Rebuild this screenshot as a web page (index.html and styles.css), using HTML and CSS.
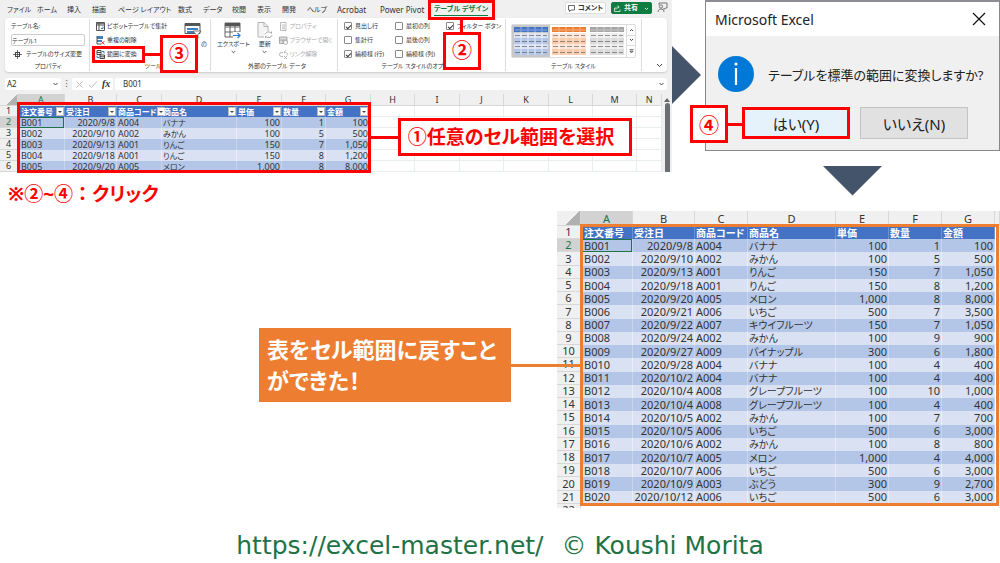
FILE: index.html
```html
<!DOCTYPE html>
<html lang="ja">
<head>
<meta charset="utf-8">
<meta name="viewport" content="width=device-width, initial-scale=1">
<title>テーブルをセル範囲に変換</title>
<link rel="stylesheet" href="styles.css">
</head>
<body>
<main class="slide">
<section class="steps">
  <div class="step-main">
    <div class="excel">
      <div class="tabbar">
        <nav class="tabs">
          <button class="tab">ファイル</button><button class="tab">ホーム</button><button class="tab">挿入</button><button class="tab">描画</button><button class="tab">ページ レイアウト</button><button class="tab">数式</button><button class="tab">データ</button><button class="tab">校閲</button><button class="tab">表示</button><button class="tab">開発</button><button class="tab">ヘルプ</button><button class="tab latin">Acrobat</button><button class="tab latin">Power Pivot</button><button class="tab active">テーブル デザイン</button>
        </nav>
        <div class="actions">
          <button class="action"><svg width="7" height="7" viewBox="0 0 7 7"><path d="M.5 .5h6v4.500h-3.500l-1.500 1.500v-1.500h-1z" fill="none" stroke="#444" stroke-width=".8"/></svg>コメント</button>
          <button class="action share"><svg width="7" height="7" viewBox="0 0 7 7"><path d="M2 3H.5v3.500h5.500V4.500M2 4.500C2 3 3 2 4.500 2M3.500 .5L5.200 2 3.500 3.500" fill="none" stroke="#fff" stroke-width=".7"/></svg>共有<svg class="share-caret" width="5" height="5" viewBox="0 0 5 5"><path d="M1 2l1.500 1.500L4 2" fill="none" stroke="#fff" stroke-width=".8"/></svg></button>
          <button class="person" aria-label="フィードバック"><svg width="11" height="11" viewBox="0 0 11 11"><g fill="none" stroke="#555" stroke-width=".8"><path d="M2 3V1h8v5H8.500L7 7.500V6"/><circle cx="4" cy="4.500" r="1.600"/><path d="M1 10c0-4 6-4 6 0"/></g></svg></button>
        </div>
      </div>
      <div class="ribbon">
        <div class="group g-prop">
          <div class="rows">
            <label for="tname">テーブル名:</label>
            <input id="tname" value="テーブル1">
            <button class="cmd resize"><svg width="9" height="9" viewBox="0 0 9 9"><g fill="none" stroke="#444"><rect x="2.500" y="2.500" width="4" height="4"/><path d="M4.500 0v9M0 4.500h9" stroke-width=".8"/></g></svg>テーブルのサイズ変更</button>
          </div>
          <div class="gname">プロパティ</div>
        </div>
        <div class="group g-tool">
          <div class="cols">
            <div class="rows">
              <button class="cmd"><svg width="9" height="9" viewBox="0 0 9 9"><path d="M.5 .5h8v8h-8zM.5 3h8M3 .5v8M1 1.700h7" fill="none" stroke="#555"/><path d="M5 6.500h2V4.500" fill="none" stroke="#2b7cd3"/></svg>ピボットテーブルで集計</button>
              <button class="cmd"><svg width="9" height="9" viewBox="0 0 9 9"><path d="M1 0h6v3H1zM1 4h5v2H1z" fill="#3f7fc1"/><path d="M1 8V0M1 8h4" stroke="#555" fill="none"/><path d="M5 5l3.500 3.500M8.500 5L5 8.500" stroke="#d33"/></svg>重複の削除</button>
              <button class="cmd"><svg width="9" height="9" viewBox="0 0 9 9"><path d="M1 .5h4v4H1zM1 2.500h4M4 5h4.500v3.500H4zM4 6.800h4.500" fill="none" stroke="#444"/><path d="M1 5.500v2h2M6 1.500h2v2" fill="none" stroke="#2b7cd3"/></svg>範囲に変換</button>
            </div>
            <button class="big slicer"><svg width="18" height="17" viewBox="0 0 18 17"><path d="M1 1.500h15v10H1z" fill="#fff" stroke="#555"/><path d="M1 1h15v3H1z" fill="#555"/><path d="M3 6h11v2H3zM3 9h7v2H3z" fill="#3f7fc1"/><path d="M9 9h8l-3 3.500V16l-2-1v-2.500z" fill="#fff" stroke="#555" stroke-width=".8"/></svg><span>の</span></button>
          </div>
          <div class="gname">ツール</div>
        </div>
        <div class="group g-ext">
          <div class="cols">
            <button class="big"><svg width="18" height="17" viewBox="0 0 18 17"><path d="M1 1h15v14H1zM1 5h15M1 10h15M6 1v14M11 1v14" fill="#fff" stroke="#555" stroke-width=".9"/><path d="M1 1h15v3H1z" fill="#555"/><path d="M9 10h9v7H9z" fill="#fff"/><path d="M9 13.500h7M13.500 11l2.500 2.500-2.500 2.500" fill="none" stroke="#2b7cd3" stroke-width="1.200"/></svg><span>エクスポート</span><svg width="5" height="4" viewBox="0 0 5 4"><path d="M.7 1l1.800 1.800L4.300 1" fill="none" stroke="#444" stroke-width=".9"/></svg></button>
            <button class="big renew"><svg width="16" height="17" viewBox="0 0 16 17"><path d="M1 .5h6l4 4V15H1zM7 .5v4h4" fill="#f4f4f4" stroke="#aaa" stroke-width=".9"/><path d="M7 9h9v8H7z" fill="#fff"/><path d="M8 12.500c.5-3 5-3.500 6.500-1V9.500M15 13c-.5 3-5 3.500-6.500 1v2" fill="none" stroke="#aaa"/></svg><span>更新</span><svg width="5" height="4" viewBox="0 0 5 4"><path d="M.7 1l1.800 1.800L4.300 1" fill="none" stroke="#444" stroke-width=".9"/></svg></button>
            <div class="rows">
              <button class="cmd" disabled><svg width="9" height="9" viewBox="0 0 9 9"><path d="M1.500 .5h5.500v8h-5.500zM3 3h3M3 5h3M3 6.700h3" fill="none" stroke="#aaa" stroke-width=".8"/></svg>プロパティ</button>
              <button class="cmd" disabled><svg width="9" height="9" viewBox="0 0 9 9"><path d="M.5 1h7.500v6.500h-7.500zM.5 4h7.500M4 4v4" fill="#ddd" stroke="#999" stroke-width=".8"/><circle cx="6.500" cy="6.500" r="2" fill="#fff" stroke="#999" stroke-width=".7"/></svg>ブラウザーで開く</button>
              <button class="cmd" disabled><svg width="9" height="9" viewBox="0 0 9 9"><path d="M4 2.500H2.500a2 2 0 0 0 0 4H4M5 2.500h1.500a2 2 0 0 1 1.500 3M6.500 .5L5.500 2M5 6l3 3M8 6L5 9" fill="none" stroke="#aaa" stroke-width=".9"/></svg>リンク解除</button>
            </div>
          </div>
          <div class="gname">外部のテーブル データ</div>
        </div>
        <div class="group g-opt">
          <div class="checks">
            <label><input type="checkbox" checked>見出し行</label>
            <label><input type="checkbox">最初の列</label>
            <label><input type="checkbox" checked>フィルター ボタン</label>
            <label><input type="checkbox">集計行</label>
            <label><input type="checkbox">最後の列</label>
            <i></i>
            <label><input type="checkbox" checked>縞模様 (行)</label>
            <label><input type="checkbox">縞模様 (列)</label>
          </div>
          <div class="gname">テーブル スタイルのオプ</div>
        </div>
        <div class="group g-style">
          <div class="gallery">
            <button class="thumb on blue" aria-label="青"><svg width="34" height="28" viewBox="0 0 34 28"><use href="#thumb"/></svg></button>
            <button class="thumb orange" aria-label="オレンジ"><svg width="34" height="28" viewBox="0 0 34 28"><use href="#thumb"/></svg></button>
            <button class="thumb gray" aria-label="灰色"><svg width="34" height="28" viewBox="0 0 34 28"><use href="#thumb"/></svg></button>
            <div class="spin">
              <button aria-label="上"><svg width="5" height="4" viewBox="0 0 5 4"><path d="M1 3l1.500-1.500L4 3" fill="none" stroke="#444"/></svg></button>
              <button aria-label="下"><svg width="5" height="4" viewBox="0 0 5 4"><path d="M1 1l1.500 1.500L4 1" fill="none" stroke="#444"/></svg></button>
              <button aria-label="その他"><svg width="5" height="5" viewBox="0 0 5 5"><path d="M.5 .7h4M1 2.200h3L2.500 4z" fill="none" stroke="#444" stroke-width=".8"/></svg></button>
            </div>
          </div>
          <div class="gname">テーブル スタイル</div>
        </div>
        <button class="fold" aria-label="リボンを折りたたむ"><svg width="7" height="5" viewBox="0 0 7 5"><path d="M1 1l2.500 2.500L6 1" fill="none" stroke="#444"/></svg></button>
      </div>
      <div class="formula">
        <label class="namebox"><input value="A2" aria-label="名前ボックス"><svg width="7" height="5" viewBox="0 0 7 5"><path d="M1.500 1l2 2 2-2" fill="none" stroke="#444"/></svg></label>
        <span class="dots">⁝</span>
        <div class="fx"><svg width="9" height="9" viewBox="0 0 9 9"><path d="M1.500 1.500l6 6M7.500 1.500l-6 6" stroke="#bbb"/></svg><svg width="10" height="9" viewBox="0 0 10 9"><path d="M1 5l2.500 2.500L9 1.500" fill="none" stroke="#bbb"/></svg><em>fx</em></div>
        <label class="value"><input value="B001" aria-label="数式バー"><svg width="7" height="5" viewBox="0 0 7 5"><path d="M1.500 1l2 2 2-2" fill="none" stroke="#444"/></svg></label>
      </div>
      <div class="sheetwrap">
        <table class="sheet small">
          <colgroup><col class="w18"><col class="w47"><col class="w52"><col class="w45"><col class="w75"><col class="w45"><col class="w44"><col class="w45"><col class="w44"><col class="w45"><col class="w44"><col class="w45"><col class="w44"><col class="w44"><col></colgroup>
          <thead><tr><th class="corner"><th class="sel">A<th>B<th>C<th>D<th>E<th>F<th>G<th>H<th>I<th>J<th>K<th>L<th>M<th>N</thead>
          <tbody>
          <tr class="head"><th>1<td><div>注文番号<button class="filter" aria-label="絞り込み"></button></div><td><div>受注日<button class="filter" aria-label="絞り込み"></button></div><td><div>商品コード<button class="filter" aria-label="絞り込み"></button></div><td><div>商品名<button class="filter" aria-label="絞り込み"></button></div><td><div>単価<button class="filter" aria-label="絞り込み"></button></div><td><div>数量<button class="filter" aria-label="絞り込み"></button></div><td><div>金額<button class="filter" aria-label="絞り込み"></button></div><td><td><td><td><td><td><td>
          <tr><th class="sel">2<td class="cursor">B001<td>2020/9/8<td>A004<td>バナナ<td>100<td>1<td>100<td><td><td><td><td><td><td>
          <tr><th>3<td>B002<td>2020/9/10<td>A002<td>みかん<td>100<td>5<td>500<td><td><td><td><td><td><td>
          <tr><th>4<td>B003<td>2020/9/13<td>A001<td>りんご<td>150<td>7<td>1,050<td><td><td><td><td><td><td>
          <tr><th>5<td>B004<td>2020/9/18<td>A001<td>りんご<td>150<td>8<td>1,200<td><td><td><td><td><td><td>
          <tr><th>6<td>B005<td>2020/9/20<td>A005<td>メロン<td>1,000<td>8<td>8,000<td><td><td><td><td><td><td>
          </tbody>
        </table>
        <div class="scroll"><svg width="6" height="5" viewBox="0 0 6 5"><path d="M0 5l3-4 3 4z" fill="#666"/></svg><i></i></div>
      </div>
      <div class="mark mark-tab"></div><div class="wire wire-tab"></div><div class="num num-2">②</div>
      <div class="mark mark-conv"></div><div class="wire wire-conv"></div><div class="num num-3">③</div>
      <div class="mark mark-range"></div><div class="wire wire-range"></div><div class="say">①任意のセル範囲を選択</div>
    </div>
    <p class="note">※②~④：<span>クリック</span></p>
  </div>
  <svg class="next" width="30" height="58" viewBox="0 0 30 58"><path d="M0 0l29 29L0 58z" fill="#44546a"/></svg>
  <div class="step-side">
    <div class="dialog" role="dialog" aria-labelledby="dt">
      <header><h2 id="dt">Microsoft Excel</h2><button class="close" aria-label="閉じる"><svg width="14" height="14" viewBox="0 0 14 14"><path d="M1 1l12 12M13 1L1 13" stroke="#111" stroke-width="1.200"/></svg></button></header>
      <div class="msg"><svg width="36" height="36" viewBox="0 0 36 36"><circle cx="18" cy="18" r="18" fill="#0078d7"/><path d="M18 12v17" stroke="#fff" stroke-width="2.200"/><circle cx="18" cy="8" r="1.600" fill="#fff"/></svg><p>テーブルを標準の範囲に変換しますか?</p></div>
      <div class="buttons"><button class="yes">はい(Y)</button><button class="no">いいえ(N)</button></div>
      <div class="num num-4">④</div><div class="wire wire-yes"></div>
    </div>
    <svg class="down" width="59" height="30" viewBox="0 0 59 30"><path d="M0 0h59L29.500 29.500z" fill="#44546a"/></svg>
  </div>
</section>
<section class="outcome">
  <p class="callout">表をセル範囲に戻すこと<br>ができた！</p>
  <div class="result">
    <table class="sheet large">
      <colgroup><col class="w24"><col class="w52"><col class="w62"><col class="w53"><col class="w88"><col class="w53"><col class="w53"><col class="w53"><col></colgroup>
      <thead><tr><th class="corner"><th class="sel">A<th>B<th>C<th>D<th>E<th>F<th>G<th></thead>
      <tbody>
      <tr class="head"><th>1<td>注文番号<td>受注日<td>商品コード<td>商品名<td>単価<td>数量<td>金額<td>
      <tr><th class="sel">2<td class="cursor">B001<td>2020/9/8<td>A004<td>バナナ<td>100<td>1<td>100<td>
      <tr><th>3<td>B002<td>2020/9/10<td>A002<td>みかん<td>100<td>5<td>500<td>
      <tr><th>4<td>B003<td>2020/9/13<td>A001<td>りんご<td>150<td>7<td>1,050<td>
      <tr><th>5<td>B004<td>2020/9/18<td>A001<td>りんご<td>150<td>8<td>1,200<td>
      <tr><th>6<td>B005<td>2020/9/20<td>A005<td>メロン<td>1,000<td>8<td>8,000<td>
      <tr><th>7<td>B006<td>2020/9/21<td>A006<td>いちご<td>500<td>7<td>3,500<td>
      <tr><th>8<td>B007<td>2020/9/22<td>A007<td>キウイフルーツ<td>150<td>7<td>1,050<td>
      <tr><th>9<td>B008<td>2020/9/24<td>A002<td>みかん<td>100<td>9<td>900<td>
      <tr><th>10<td>B009<td>2020/9/27<td>A009<td>パイナップル<td>300<td>6<td>1,800<td>
      <tr><th>11<td>B010<td>2020/9/28<td>A004<td>バナナ<td>100<td>4<td>400<td>
      <tr><th>12<td>B011<td>2020/10/2<td>A004<td>バナナ<td>100<td>4<td>400<td>
      <tr><th>13<td>B012<td>2020/10/4<td>A008<td>グレープフルーツ<td>100<td>10<td>1,000<td>
      <tr><th>14<td>B013<td>2020/10/4<td>A008<td>グレープフルーツ<td>100<td>4<td>400<td>
      <tr><th>15<td>B014<td>2020/10/5<td>A002<td>みかん<td>100<td>7<td>700<td>
      <tr><th>16<td>B015<td>2020/10/5<td>A006<td>いちご<td>500<td>6<td>3,000<td>
      <tr><th>17<td>B016<td>2020/10/6<td>A002<td>みかん<td>100<td>8<td>800<td>
      <tr><th>18<td>B017<td>2020/10/7<td>A005<td>メロン<td>1,000<td>4<td>4,000<td>
      <tr><th>19<td>B018<td>2020/10/7<td>A006<td>いちご<td>500<td>6<td>3,000<td>
      <tr><th>20<td>B019<td>2020/10/9<td>A003<td>ぶどう<td>300<td>9<td>2,700<td>
      <tr><th>21<td>B020<td>2020/10/12<td>A006<td>いちご<td>500<td>6<td>3,000<td>
      </tbody>
      <tfoot><tr><th><div class="cut">22</div><td colspan="8"></tfoot>
    </table>
    <div class="frame"></div>
  </div>
</section>
<footer class="credit"><a href="https://excel-master.net/">https://excel-master.net/</a><span>© Koushi Morita</span></footer>
</main>
<svg width="0" height="0" class="defs"><defs><g id="thumb"><path class="t-head" d="M0 0h34v5H0z"/><path class="t-a" d="M0 6h34v5H0zM0 17h34v5H0z"/><path class="t-b" d="M0 11h34v6H0zM0 22h34v6H0z"/><path d="M1 3h5M8 3h5M15 3h5M22 3h5M29 3h4" stroke="#fff" stroke-opacity=".4"/><path d="M1 8.500h5M8 8.500h5M15 8.500h5M22 8.500h5M29 8.500h4M1 14.500h5M8 14.500h5M15 14.500h5M22 14.500h5M29 14.500h4M1 19.500h5M8 19.500h5M15 19.500h5M22 19.500h5M29 19.500h4M1 25.500h5M8 25.500h5M15 25.500h5M22 25.500h5M29 25.500h4" stroke="#555" stroke-opacity=".6"/><path d="M7 0v28M14 0v28M21 0v28M28 0v28" stroke="#fff" stroke-opacity=".5"/></g></defs></svg>
</body>
</html>
```
FILE: styles.css
```css
* { box-sizing: border-box; }
body {
  margin: 0;
  background: #fff;
  color: #333;
  font-family: "Noto Sans", "Noto Sans CJK JP", sans-serif;
  font-feature-settings: "palt";
}
button, input {
  margin: 0;
  padding: 0;
  border: 0;
  background: none;
  color: inherit;
  font: inherit;
  font-feature-settings: inherit;
}
button { white-space: nowrap; }
svg { display: block; flex: none; }
p, h2 { margin: 0; }
.defs { position: absolute; }
.slide { min-height: 100vh; display: flex; flex-direction: column; overflow: hidden; }

.steps { display: flex; align-items: flex-start; }
.step-main { flex: none; width: 672px; }
.next { margin-top: 46px; }
.step-side { flex: 1; min-width: 0; margin-left: 3px; display: flex; flex-direction: column; align-items: center; }
.down { margin-top: 15px; }

/* Excel window */
.excel { position: relative; background: #f0f0f0; font-size: 7px; line-height: 10px; }
.tabbar { display: flex; justify-content: space-between; height: 18px; padding: 0 4px 0 7px; }
.tabs { display: grid; grid-template-columns: 30px 30px 25px 26px 60px 25px 29px 25px 25px 25px 30px 43px 54px 60px; justify-items: start; align-items: center; }
.tab { font-size: 7px; line-height: 15px; }
.tab.latin { font-size: 8px; }
.tab.active { color: #107c41; font-weight: bold; border-bottom: 1px solid #107c41; line-height: 13px; }
.actions { display: flex; align-items: flex-start; gap: 5px; padding-top: 2px; font-weight: bold; }
.action { display: flex; align-items: center; justify-content: center; gap: 3px; width: 41px; height: 12px; background: #fff; border: 1px solid #ddd; border-radius: 2px; }
.share { background: #107c41; border-color: #107c41; color: #fff; }
.share-caret { margin-left: 3px; }
.ribbon { display: flex; height: 54px; margin: 0 5px; background: #fff; border-radius: 4px; box-shadow: 0 1px 2px #ccc; font-size: 6px; }
.group { display: flex; flex-direction: column; border-right: 1px solid #ddd; margin: 1px 0; }
.gname { margin-top: auto; text-align: center; line-height: 9px; white-space: nowrap; }
.rows { display: grid; grid-auto-rows: 14px; align-items: center; justify-items: start; }
.cols { display: flex; }
.cmd { display: flex; align-items: center; gap: 2px; }
.cmd:disabled { color: #aaa; }
.g-prop { width: 85px; padding: 0 4px 0 6px; }
.g-prop input { width: 100%; height: 12px; border: 1px solid #ccc; border-radius: 2px; }
.resize { padding-left: 2px; gap: 4px; }
.g-tool { width: 121px; padding-left: 6px; }
.g-tool .rows { width: 83px; }
.big { display: flex; flex-direction: column; align-items: center; padding-top: 3px; }
.big span { line-height: 11px; }
.slicer { width: 28px; }
.slicer span { align-self: flex-end; }
.g-ext { width: 127px; padding-left: 6px; }
.renew { margin: 0 6px 0 7px; }
.g-opt { width: 168px; padding-left: 6px; }
.checks { display: grid; grid-template-columns: 51px 51px 1fr; grid-auto-rows: 14px; align-items: center; white-space: nowrap; }
.checks label { display: flex; align-items: center; gap: 3px; }
.checks input { appearance: none; width: 8px; height: 8px; border: 1px solid #888; border-radius: 1px; background: #fff; display: grid; place-items: center; }
.checks input:checked::after { content: ""; width: 4px; height: 2px; border: solid #333; border-width: 0 0 1px 1px; transform: rotate(-45deg); }
.g-opt .gname { padding-right: 24px; }
.g-style { width: 136px; padding: 5px 5px 0; }
.gallery { display: flex; border: 1px solid #ddd; border-radius: 2px; height: 34px; }
.thumb { flex: 1; display: grid; place-items: center; }
.thumb.on { background: #c8c8c8; }
.blue { --h: #4472c4; --a: #d9e1f2; --b: #b4c6e7; }
.orange { --h: #ed7d31; --a: #fce4d6; --b: #f8cbad; }
.gray { --h: #a5a5a5; --a: #ededed; --b: #dbdbdb; }
.t-head { fill: var(--h); }
.t-a { fill: var(--a); }
.t-b { fill: var(--b); }
.spin { width: 9px; display: grid; border-left: 1px solid #ddd; }
.spin button { display: grid; place-items: center; }
.spin button + button { border-top: 1px solid #ddd; }
.fold { margin: auto 4px 4px auto; }

.formula { display: flex; align-items: center; margin: 6px 5px 4px; height: 12px; font-size: 8px; }
.namebox, .fx, .value { display: flex; align-items: center; height: 12px; background: #fff; border-radius: 2px; padding: 0 2px; }
.namebox { width: 56px; }
.namebox input { width: 100%; min-width: 0; }
.dots { width: 11px; text-align: center; line-height: 12px; }
.fx { width: 41px; gap: 4px; padding-left: 3px; margin-right: 2px; }
.fx em { font-family: "Liberation Serif", serif; font-size: 10px; font-weight: bold; }
.value { flex: 1; padding-left: 8px; }
.value input { flex: 1; }

/* Worksheets */
.sheetwrap { display: flex; }
.sheet { table-layout: fixed; border-spacing: 0; width: 100%; background: #fff; }
.sheet th, .sheet td { padding: 0 1px; white-space: nowrap; border-right: 1px solid #e8eeee; border-bottom: 1px solid #e8eeee; text-align: left; }
.sheet th { background: #f0f0f0; font-weight: normal; text-align: center; border-color: #d8d8d8; }
.sheet th.sel { background: #d2d2d2; color: #217346; }
.sheet th.corner { background: linear-gradient(135deg, #f0f0f0 62%, #b0b0b0 62%); }
.sheet tbody td:nth-child(n+2):nth-child(-n+8) { background: #d9e1f2; border-right-color: #e8edf8; border-bottom: 0; }
.sheet tbody tr:nth-child(even) td:nth-child(n+2):nth-child(-n+8) { background: #b4c6e7; border-right-color: #c8d5ee; }
.sheet tbody tr.head td:nth-child(n+2):nth-child(-n+8) { background: #4472c4; border-right-color: #6c90d2; color: #fff; font-weight: bold; }
.sheet tbody tr:not(.head) td:nth-child(3),
.sheet tbody tr:not(.head) td:nth-child(n+6) { text-align: right; }
.sheet tbody td:nth-child(2) { padding-left: 3px; }
.sheet td.cursor { box-shadow: inset 0 0 0 1px #217346; }
.small { font-size: 9px; line-height: 10px; }
.small th, .small td { height: 11px; }
.small thead th { height: 12px; }
.small tbody td:nth-child(5), .small .head td { font-size: 8px; }
.small .head td { padding-right: 0; }
.small tbody td:nth-child(8) { padding-right: 2px; }
.small .head div { display: flex; justify-content: space-between; align-items: center; }
.filter { flex: none; width: 8px; height: 9px; background: #fff; border: 1px solid #bbb; display: grid; place-items: center; }
.filter::after { content: ""; border: 2px solid transparent; border-top-color: #444; border-bottom: 0; }
.scroll { width: 10px; padding-top: 3px; display: flex; flex-direction: column; align-items: center; gap: 1px; }
.scroll i { flex: 1; width: 5px; border-radius: 3px 3px 0 0; background: #6b6f72; }
.large { height: 297px; font-size: 11px; line-height: 12px; }
.large thead th { height: 15px; vertical-align: bottom; }
.large tbody td:nth-child(5), .large .head td { font-size: 10px; }
.large tfoot th, .large tfoot td { height: 4px; border-bottom: 0; }
.cut { height: 4px; overflow: hidden; line-height: 12px; }
.w18 { width: 18px; } .w24 { width: 24px; } .w44 { width: 44px; } .w45 { width: 45px; }
.w47 { width: 47px; } .w52 { width: 52px; } .w53 { width: 53px; } .w62 { width: 62px; }
.w75 { width: 75px; } .w88 { width: 88px; }

/* Annotations over the windows */
.mark, .wire, .num, .say, .frame { position: absolute; }
.mark { border: 3px solid #f00; }
.wire { background: #f00; height: 3px; }
.num, .say { background: #fff; border: 3px solid #f00; color: #f00; font-weight: bold; display: grid; place-items: center; }
.num { width: 38px; height: 38px; font-size: 20px; }
.mark-tab { left: 428px; top: 0; width: 67px; height: 20px; }
.wire-tab { left: 460px; top: 20px; width: 3px; height: 12px; }
.num-2 { left: 443px; top: 32px; }
.mark-conv { left: 92px; top: 46px; width: 53px; height: 17px; }
.wire-conv { left: 145px; top: 53px; width: 15px; }
.num-3 { left: 160px; top: 35px; }
.mark-range { left: 17px; top: 102px; width: 354px; height: 71px; }
.wire-range { left: 371px; top: 136px; width: 27px; }
.say { left: 398px; top: 118px; width: 234px; height: 38px; padding-right: 8px; font-size: 19px; white-space: nowrap; }
.note { margin: 10px 0 0 8px; color: #f00; font-size: 19px; line-height: 24px; font-weight: bold; font-feature-settings: normal; }
.note span { font-feature-settings: "palt"; }

/* Message box */
.dialog { position: relative; align-self: stretch; border: 1px solid #888; border-top: 2px solid #8c8e94; background: #f0f0f0; color: #222; height: 151px; }
.dialog header { display: flex; justify-content: space-between; align-items: center; height: 34px; background: #fff; padding: 0 13px 0 9px; }
.dialog h2 { font-size: 14px; font-weight: normal; }
.msg { display: flex; align-items: center; gap: 14px; padding: 20px 8px 0 12px; font-size: 13px; }
.msg p { white-space: nowrap; }
.buttons { display: flex; gap: 10px; padding: 15px 0 0 36px; font-size: 15px; }
.buttons button { width: 108px; height: 32px; }
.yes { background: #e5f1fb; outline: 3px solid #f00; outline-offset: -3px; }
.buttons .no { background: #e1e1e1; border: 1px solid #c4c4c4; }
.num-4 { left: -16px; top: 103px; }
.wire-yes { left: 22px; top: 121px; width: 14px; }

/* Result */
.outcome { display: flex; justify-content: flex-end; align-items: flex-start; margin-top: 15px; }
.callout { position: relative; margin: 117px 46px 0 0; width: 252px; padding: 6px 8px; background: #ed7d31; color: #fff; font-size: 22px; line-height: 31px; font-weight: bold; white-space: nowrap; }
.callout::after { content: ""; position: absolute; z-index: 1; left: 100%; top: 36px; width: 70px; height: 3px; background: #ed7d31; }
.result { position: relative; width: 443px; }
.steps { max-height: 196px; }
.frame { inset: 13px 1px 2px 23px; border: 3px solid #ed7d31; }
.credit { display: flex; justify-content: center; gap: 18px; margin-top: 20px; color: #217346; font-family: "DejaVu Sans", sans-serif; font-size: 25px; line-height: 36px; }
.credit a { color: inherit; text-decoration: none; }
```
